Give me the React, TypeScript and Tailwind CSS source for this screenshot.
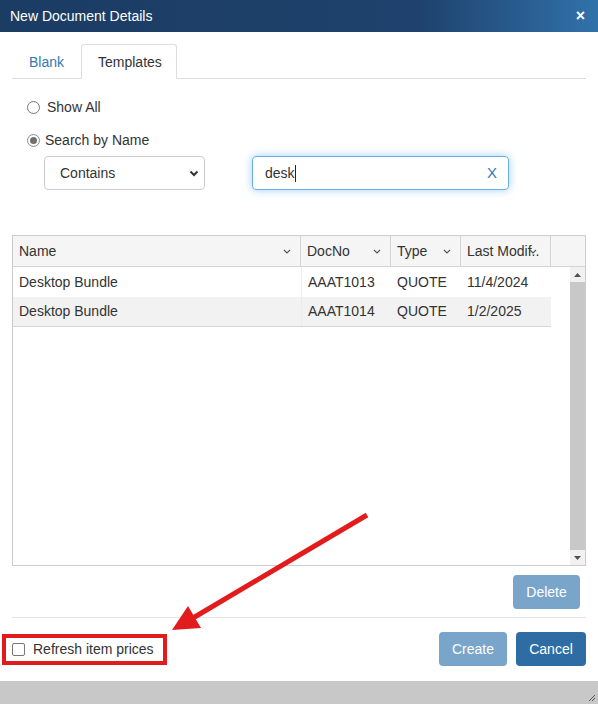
import React from 'react'

function Chevron({ className = '' }: { className?: string }) {
  return (
    <svg width="8" height="5" viewBox="0 0 8 5" className={className}>
      <path d="M1 1 L4 4 L7 1" fill="none" stroke="#555" strokeWidth="1.1" />
    </svg>
  )
}

function HeadCell({ label, w, last }: { label: string; w: string; last?: boolean }) {
  return (
    <div className={`${w} relative flex items-center pl-[6px] border-r border-[#d4d4d4] overflow-hidden whitespace-nowrap`}>
      <span>{label}</span>
      <Chevron className={last ? 'absolute right-[13px] top-[13px]' : 'absolute right-[9px] top-[13px]'} />
    </div>
  )
}

const rows = [
  { name: 'Desktop Bundle', doc: 'AAAT1013', type: 'QUOTE', date: '11/4/2024', bg: 'bg-white' },
  { name: 'Desktop Bundle', doc: 'AAAT1014', type: 'QUOTE', date: '1/2/2025', bg: 'bg-[#f2f2f2]' },
]

export default function App() {
  return (
    <div className="relative w-[598px] h-[704px] bg-white overflow-hidden flex flex-col font-['Liberation_Sans',Arial,sans-serif] text-[14px] text-[#333]">
      {/* title bar */}
      <div className="h-[32px] shrink-0 flex items-center justify-between pl-[10px] pr-[13px] bg-gradient-to-r from-[#1b3c63] via-[#1e426d] via-70% to-[#3172ab] text-white">
        <span>New Document Details</span>
        <span className="font-bold text-[16px] leading-none">×</span>
      </div>

      <div className="px-3">
        {/* tabs */}
        <div className="mt-[12px] flex h-[35px] border-b border-[#ddd]">
          <div className="w-[68px] flex items-center pl-[17px] pt-[2px] text-[#337ab7]">Blank</div>
          <div className="ml-[1px] w-[96px] -mb-px flex items-center pl-[16px] pt-[2px] border border-[#ddd] border-b-white rounded-t-[3px] bg-white">
            Templates
          </div>
        </div>

        {/* radios */}
        <div className="mt-[18px] h-[20px] flex items-center pl-[15px]">
          <span className="w-[13px] h-[13px] rounded-full border border-[#767676] bg-white" />
          <span className="ml-[7px]">Show All</span>
        </div>
        <div className="mt-[13px] h-[20px] flex items-center pl-[15px]">
          <span className="w-[13px] h-[13px] rounded-full border border-[#8a8a8a] bg-white flex items-center justify-center">
            <span className="w-[7px] h-[7px] rounded-full bg-[#6f6f6f]" />
          </span>
          <span className="ml-[5px]">Search by Name</span>
        </div>

        <div className="mt-[6px] flex items-center pl-[32px]">
          <div className="w-[161px] h-[34px] border border-[#ccc] rounded-[4px] flex items-center justify-between pl-[15px] pr-[5px]">
            <span>Contains</span>
            <svg width="10" height="7" viewBox="0 0 10 7">
              <path d="M1.5 1.5 L5 5 L8.5 1.5" fill="none" stroke="#333" strokeWidth="2" />
            </svg>
          </div>
          <div className="ml-[47px] w-[257px] h-[34px] border border-[#66afe9] rounded-[4px] shadow-[0_0_8px_rgba(102,175,233,0.6)] flex items-center justify-between pl-[12px] pr-[11px]">
            <span className="flex items-center">
              desk<span className="w-px h-[17px] bg-[#222]" />
            </span>
            <span className="text-[#337ab7] text-[15px]">X</span>
          </div>
        </div>

        {/* grid */}
        <div className="mt-[45px] w-[574px] h-[331px] border border-[#ccc] flex flex-col">
          <div className="h-[31px] shrink-0 flex bg-[#f5f5f5] border-b border-[#d4d4d4]">
            <HeadCell label="Name" w="w-[288px]" />
            <HeadCell label="DocNo" w="w-[90px]" />
            <HeadCell label="Type" w="w-[70px]" />
            <HeadCell label="Last Modif.." w="w-[90px]" last />
            <div className="flex-1" />
          </div>
          <div className="flex-1 flex">
            <div className="w-[538px]">
              {rows.map((r, i) => (
                <div key={i} className={`h-[30px] flex items-center ${r.bg} ${i === rows.length - 1 ? 'border-b border-[#d4d4d4]' : ''}`}>
                  <div className="w-[288px] pl-[6px]">{r.name}</div>
                  <div className="w-[90px] pl-[6px] h-full flex items-center border-l border-[#ececec]">{r.doc}</div>
                  <div className="w-[70px] pl-[6px]">{r.type}</div>
                  <div className="w-[90px] pl-[6px]">{r.date}</div>
                </div>
              ))}
            </div>
            <div className="flex-1" />
            <div className="w-[15px] flex flex-col bg-[#c8c8c8]">
              <div className="h-[15px] bg-[#f1f1f1] flex items-center justify-center">
                <svg width="7" height="4" viewBox="0 0 7 4"><path d="M0 4 L3.5 0 L7 4 Z" fill="#505050" /></svg>
              </div>
              <div className="flex-1" />
              <div className="h-[15px] bg-[#f1f1f1] flex items-center justify-center">
                <svg width="7" height="4" viewBox="0 0 7 4"><path d="M0 0 L3.5 4 L7 0 Z" fill="#505050" /></svg>
              </div>
            </div>
          </div>
        </div>

        <div className="mt-[9px] flex justify-end pr-[6px]">
          <button className="w-[67px] h-[34px] rounded-[4px] bg-[#7aa5cb] text-white">Delete</button>
        </div>

        <div className="mt-[8px] border-t border-[#e5e5e5]" />
      </div>

      {/* footer */}
      <div className="mt-[14px] h-[34px] flex items-center justify-between pl-[2px] pr-3">
        <div className="w-[165px] h-[31px] border-[4px] border-[#e21c1c] flex items-center pl-[6px]">
          <span className="w-[13px] h-[13px] rounded-[2px] border border-[#767676] bg-white" />
          <span className="ml-[8px]">Refresh item prices</span>
        </div>
        <div className="flex gap-[9px]">
          <button className="w-[68px] h-[34px] rounded-[4px] bg-[#7aa5cb] text-white">Create</button>
          <button className="w-[70px] h-[34px] rounded-[4px] bg-[#2e6da4] text-white">Cancel</button>
        </div>
      </div>

      <div className="mt-auto h-[23px] bg-[#c8c8c8] flex items-end justify-end pr-[2px] pb-[2px]">
        <svg width="9" height="9" viewBox="0 0 9 9">
          <path d="M8 2 L2 8 M8 5 L5 8" stroke="#555" strokeWidth="1" />
        </svg>
      </div>

      {/* annotation arrow */}
      <svg className="absolute inset-0 pointer-events-none" width="598" height="704" viewBox="0 0 598 704">
        <line x1="367" y1="515" x2="193" y2="618" stroke="#e21c1c" strokeWidth="5" />
        <polygon points="172,630 188,606 201,628" fill="#e21c1c" />
      </svg>
    </div>
  )
}
